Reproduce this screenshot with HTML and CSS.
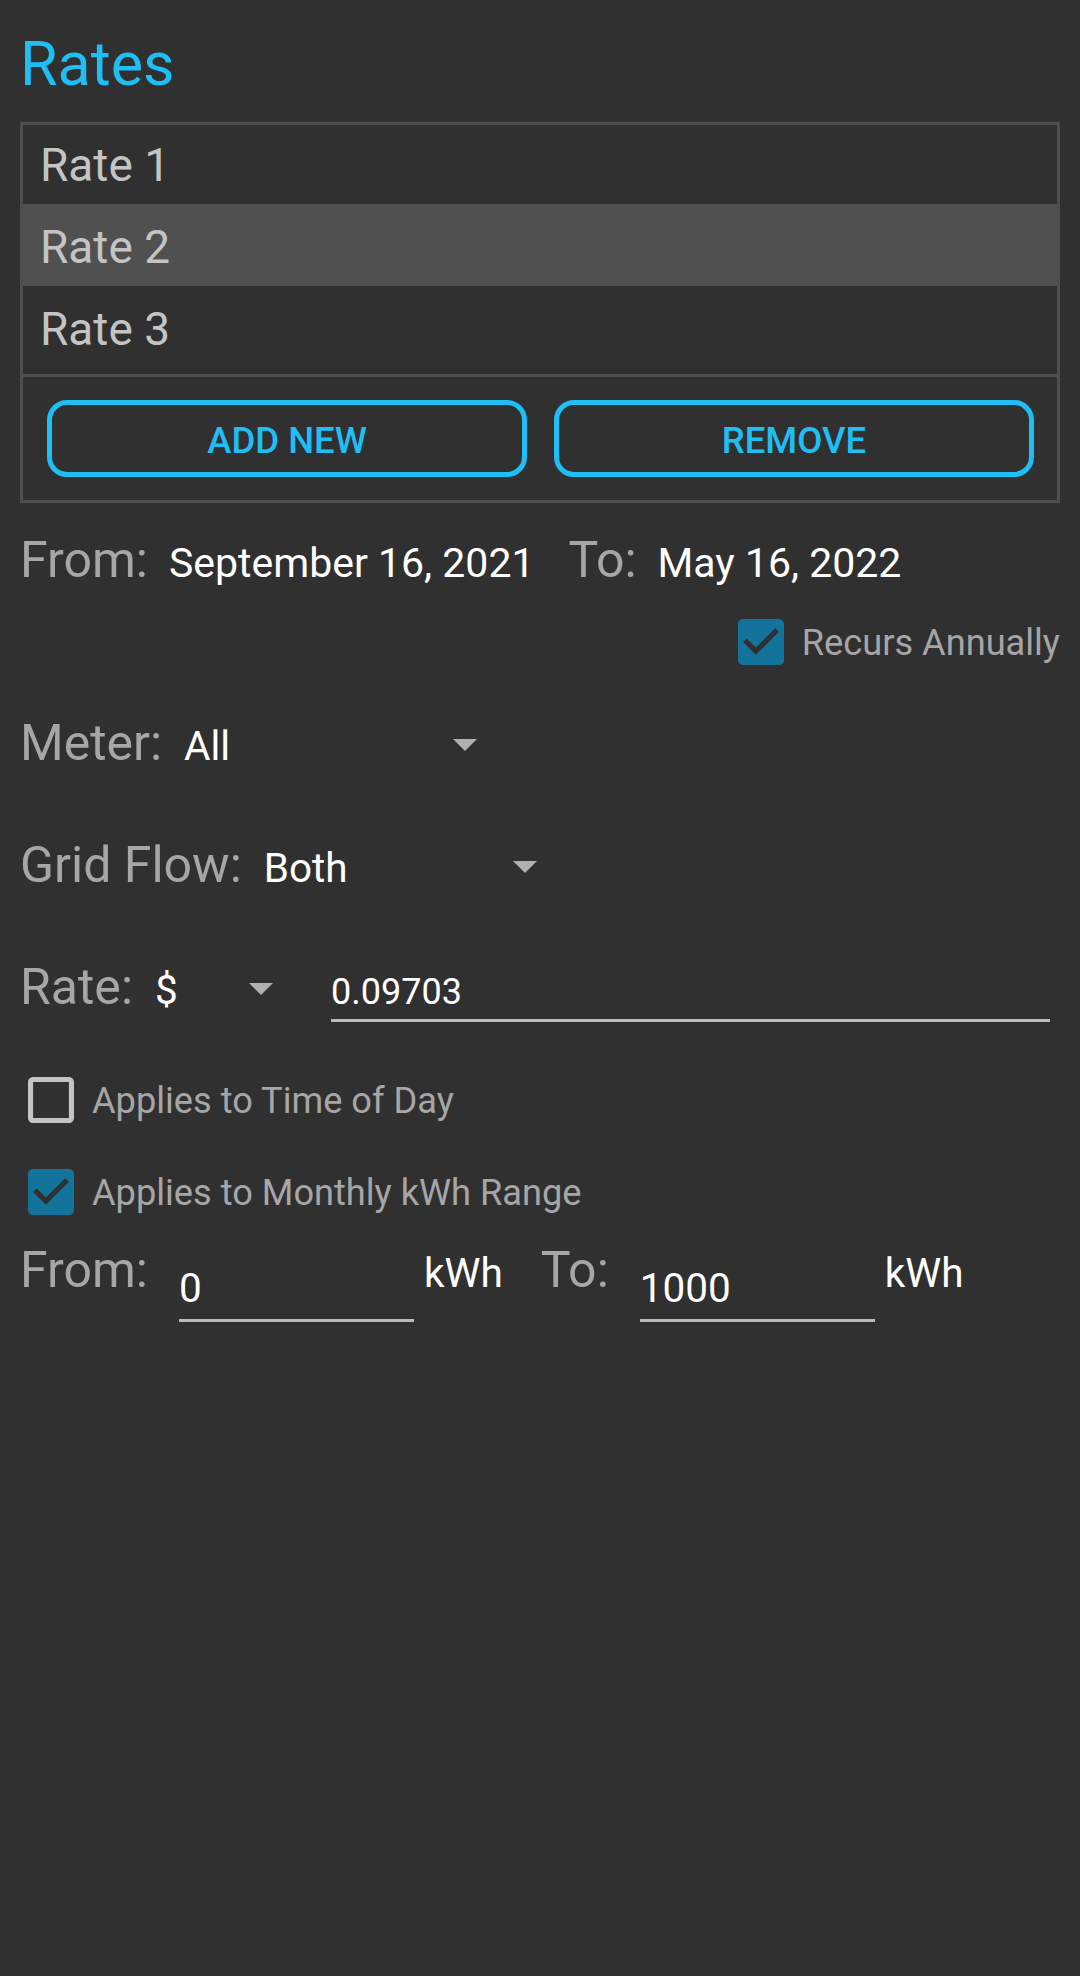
FILE: index.html
```html
<!DOCTYPE html>
<html lang="en">
<head>
    <meta charset="UTF-8">
    <meta name="viewport" content="width=device-width, initial-scale=1.0">
    <title>Rates</title>
    <link rel="stylesheet" href="styles.css">
</head>
<body>

<div class="page">
    <h1 class="title">Rates</h1>

    <div class="rate-box">
        <div class="rate-list">
            <div class="rate-row">Rate 1</div>
            <div class="rate-row selected">Rate 2</div>
            <div class="rate-row">Rate 3</div>
        </div>
        <div class="rate-actions">
            <button class="outline-button">ADD NEW</button>
            <button class="outline-button">REMOVE</button>
        </div>
    </div>

    <div class="date-row">
        <span class="label">From:</span>
        <span class="date-value from-date">September 16, 2021</span>
        <span class="label">To:</span>
        <span class="date-value">May 16, 2022</span>
    </div>

    <div class="check-row recurs">
        <svg class="check-icon" viewBox="3 3 18 18"><path fill="#13739a" d="M19 3H5c-1.11 0-2 .9-2 2v14c0 1.1.89 2 2 2h14c1.11 0 2-.9 2-2V5c0-1.1-.89-2-2-2z"/><path fill="#303030" d="M10 17l-5-5 1.41-1.41L10 14.17l7.59-7.59L19 8l-9 9z"/></svg>
        <span class="check-text">Recurs Annually</span>
    </div>

    <div class="field-row meter-row">
        <span class="label">Meter:</span>
        <div class="spinner meter-spinner">
            <span class="spinner-value">All</span>
            <svg class="caret" viewBox="0 0 10 5"><path d="M0 0h10L5 5z"/></svg>
        </div>
    </div>

    <div class="field-row">
        <span class="label">Grid Flow:</span>
        <div class="spinner flow-spinner">
            <span class="spinner-value">Both</span>
            <svg class="caret" viewBox="0 0 10 5"><path d="M0 0h10L5 5z"/></svg>
        </div>
    </div>

    <div class="field-row">
        <span class="label">Rate:</span>
        <div class="spinner currency-spinner">
            <span class="spinner-value">$</span>
            <svg class="caret" viewBox="0 0 10 5"><path d="M0 0h10L5 5z"/></svg>
        </div>
        <span class="edit-field rate-field">0.09703</span>
    </div>

    <div class="check-row time-check">
        <svg class="check-icon" viewBox="3 3 18 18"><path fill="#c4c4c4" d="M19 5v14H5V5h14m0-2H5c-1.1 0-2 .9-2 2v14c0 1.1.9 2 2 2h14c1.1 0 2-.9 2-2V5c0-1.1-.9-2-2-2z"/></svg>
        <span class="check-text">Applies to Time of Day</span>
    </div>

    <div class="check-row kwh-check">
        <svg class="check-icon" viewBox="3 3 18 18"><path fill="#13739a" d="M19 3H5c-1.11 0-2 .9-2 2v14c0 1.1.89 2 2 2h14c1.11 0 2-.9 2-2V5c0-1.1-.89-2-2-2z"/><path fill="#303030" d="M10 17l-5-5 1.41-1.41L10 14.17l7.59-7.59L19 8l-9 9z"/></svg>
        <span class="check-text">Applies to Monthly kWh Range</span>
    </div>

    <div class="kwh-row">
        <span class="label">From:</span>
        <span class="edit-field kwh-field">0</span>
        <span class="unit">kWh</span>
        <span class="label">To:</span>
        <span class="edit-field kwh-field">1000</span>
        <span class="unit">kWh</span>
    </div>
</div>

</body>
</html>
```

FILE: styles.css
```css
body {
    margin: 0;
    background-color: #303030;
    font-family: Roboto, "Liberation Sans", sans-serif;
    color: #fff;
}
.page {
    min-height: 1976px;
    box-sizing: border-box;
    padding: 30px 20px 0 20px;
}
.title {
    margin: 0;
    font-size: 61px;
    font-weight: 400;
    line-height: 68px;
    color: #1fbff5;
}

/* rate list */
.rate-box {
    margin-top: 24px;
    border: 3px solid #4e4e4e;
}
.rate-list {
    height: 249px;
    overflow: hidden;
}
.rate-row {
    height: 82px;
    box-sizing: border-box;
    padding: 4px 0 0 17px;
    font-size: 46px;
    line-height: 78px;
    color: #c4c4c4;
}
.rate-row:first-child {
    margin-top: -3px;
}
.rate-row.selected {
    background-color: #505050;
}
.rate-actions {
    display: flex;
    gap: 27px;
    padding: 23px 23px 23px 24px;
    border-top: 3px solid #4e4e4e;
}
.outline-button {
    flex: 1;
    height: 77px;
    padding: 4px 0 0;
    border: 5px solid #1fbff5;
    border-radius: 20px;
    background: none;
    font-family: Roboto, "Liberation Sans", sans-serif;
    font-size: 36.5px;
    font-weight: 500;
    line-height: 63px;
    color: #1fbff5;
}

/* labels and values */
.label {
    font-size: 50px;
    line-height: 60px;
    color: #a6a6a6;
}
.date-row {
    display: flex;
    align-items: baseline;
    margin-top: 27px;
    height: 60px;
}
.date-value {
    margin-left: 21px;
    font-size: 41px;
    line-height: 60px;
    color: #fff;
}
.from-date {
    margin-right: 34px;
}

/* checkboxes */
.check-row {
    display: flex;
    align-items: center;
}
.check-icon {
    width: 46px;
    height: 46px;
    flex: none;
}
.check-text {
    margin-left: 18px;
    font-size: 36.2px;
    line-height: 45px;
    color: #a6a6a6;
}
.recurs {
    justify-content: flex-end;
    margin-top: 29px;
}
.time-check {
    margin: 60px 0 0 8px;
}
.kwh-check {
    margin: 46px 0 0 8px;
}

/* spinners */
.field-row {
    display: flex;
    align-items: baseline;
    height: 60px;
    margin-top: 62px;
}
.meter-row {
    margin-top: 48px;
}
.spinner {
    display: flex;
    align-items: center;
    justify-content: space-between;
    margin-left: 22px;
}
.spinner-value {
    font-size: 40.5px;
    line-height: 60px;
}
.caret {
    width: 24px;
    height: 12px;
    margin-bottom: 3px;
    fill: #b0b0b0;
}
.meter-spinner {
    width: 293px;
}
.flow-spinner {
    width: 273px;
}
.currency-spinner {
    width: 118px;
}
.edit-field {
    display: inline-block;
    box-sizing: border-box;
    padding-bottom: 5px;
    border-bottom: 3px solid #bababa;
    font-size: 36px;
    line-height: 44px;
    color: #fff;
}
.rate-field {
    flex: 1;
    margin: 0 10px 0 58px;
}

/* kWh range */
.kwh-row {
    display: flex;
    align-items: baseline;
    margin-top: 25px;
}
.kwh-field {
    align-self: flex-start;
    width: 235px;
    margin: 23px 0 0 31px;
    padding-bottom: 6px;
    font-size: 40.5px;
    line-height: 50px;
}
.unit {
    margin: 0 38px 0 10px;
    font-size: 40.5px;
    line-height: 60px;
}
```
